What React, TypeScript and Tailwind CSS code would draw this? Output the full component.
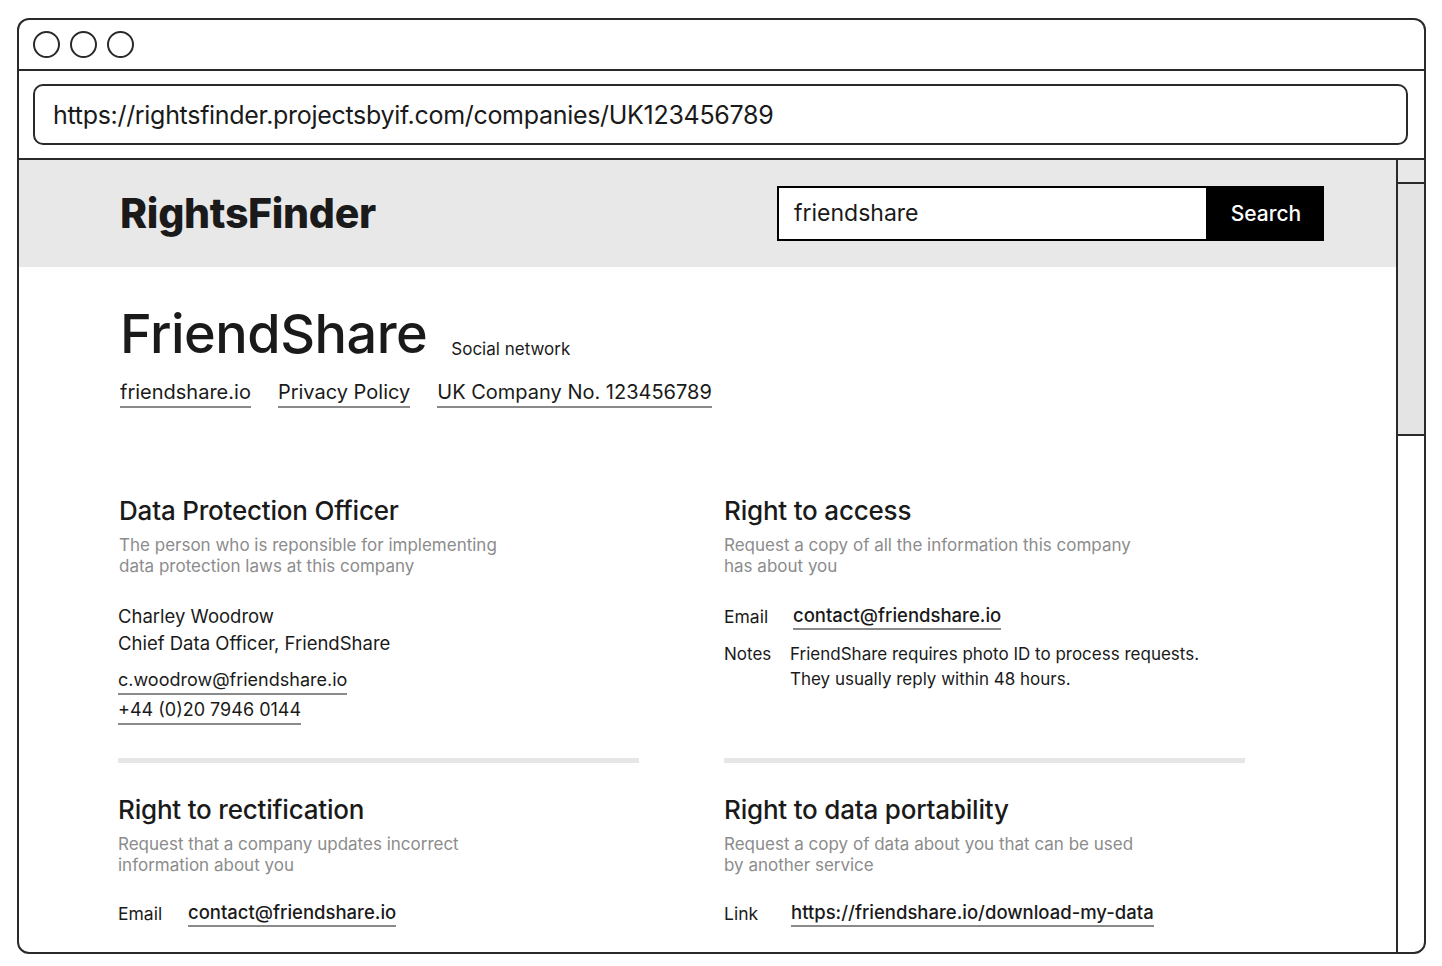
const font = { fontFamily: 'Inter, "Noto Sans", sans-serif' };

function Underlined({ children, className = '' }: { children: React.ReactNode; className?: string }) {
  return (
    <a className={`border-b-2 border-[#8a8a8a] pb-[1px] text-[#1a1a1a] ${className}`}>{children}</a>
  );
}

function SectionHead({ title, desc }: { title: string; desc: string[] }) {
  return (
    <div>
      <h2 className="text-[26px] font-medium leading-[32px] text-[#1a1a1a] tracking-[-0.2px]">{title}</h2>
      <p className="mt-[8px] text-[17px] leading-[21px] text-[#8c8c8c]">
        {desc.map((d, i) => (
          <span key={i} className="block">{d}</span>
        ))}
      </p>
    </div>
  );
}

export default function App() {
  return (
    <div className="w-[1442px] h-[966px] bg-white pt-[18px] pl-[17px]" style={font}>
      <div className="w-[1409px] h-[936px] border-2 border-[#2a2a2a] rounded-[12px] flex flex-col overflow-hidden">
        {/* title bar */}
        <div className="h-[51px] flex items-center gap-[10px] pl-[14px] border-b-2 border-[#2a2a2a] shrink-0">
          <span className="w-[27px] h-[27px] rounded-full border-2 border-[#2a2a2a]" />
          <span className="w-[27px] h-[27px] rounded-full border-2 border-[#2a2a2a]" />
          <span className="w-[27px] h-[27px] rounded-full border-2 border-[#2a2a2a]" />
        </div>
        {/* address bar */}
        <div className="h-[89px] flex items-center pl-[14px] pr-[16px] border-b-2 border-[#2a2a2a] shrink-0">
          <div className="w-full h-[61px] border-2 border-[#2a2a2a] rounded-[10px] flex items-center pl-[18px] pt-[3px] text-[25px] text-[#1a1a1a] tracking-[-0.3px]">
            https://rightsfinder.projectsbyif.com/companies/UK123456789
          </div>
        </div>
        {/* page */}
        <div className="flex flex-1 min-h-0">
          <main className="flex-1 min-w-0">
            <header className="h-[107px] bg-[#e8e8e8] flex items-center justify-between pl-[101px] pr-[72px]">
              <div className="text-[41px] font-extrabold text-[#1a1a1a] tracking-[-0.3px]">RightsFinder</div>
              <div className="flex h-[55px] border-2 border-black">
                <div className="w-[427px] bg-white flex items-center pl-[15px] text-[23px] text-[#1a1a1a]">friendshare</div>
                <button className="w-[116px] bg-black text-white text-[21px] font-medium pl-[4px]">Search</button>
              </div>
            </header>

            <div className="pl-[101px]">
              <div className="flex items-end mt-[36px]">
                <h1 className="text-[54px] font-medium leading-[62px] text-[#1a1a1a] tracking-[-0.5px]">FriendShare</h1>
                <span className="ml-[24px] mb-[3px] text-[17px] text-[#1a1a1a]">Social network</span>
              </div>
              <div className="flex gap-[27px] mt-[14px] text-[20px] leading-[26px]">
                <Underlined>friendshare.io</Underlined>
                <Underlined>Privacy Policy</Underlined>
                <Underlined>UK Company No. 123456789</Underlined>
              </div>

              <div className="grid grid-cols-[520px_520px] gap-x-[86px] mt-[87px] -ml-[1px]">
                {/* DPO */}
                <section>
                  <SectionHead
                    title="Data Protection Officer"
                    desc={['The person who is reponsible for implementing', 'data protection laws at this company']}
                  />
                  <div className="mt-[26px] -ml-[1px] text-[18.5px] leading-[27px] text-[#1a1a1a]">
                    <div>Charley Woodrow</div>
                    <div>Chief Data Officer, FriendShare</div>
                  </div>
                  <div className="mt-[11px] -ml-[1px] flex flex-col items-start gap-[3px] text-[18px] leading-[24px]">
                    <Underlined>c.woodrow@friendshare.io</Underlined>
                    <Underlined>+44 (0)20 7946 0144</Underlined>
                  </div>
                </section>

                {/* access */}
                <section className="-ml-[1px]">
                  <SectionHead
                    title="Right to access"
                    desc={['Request a copy of all the information this company', 'has about you']}
                  />
                  <div className="mt-[26px] flex items-center text-[17.5px] leading-[24px] text-[#1a1a1a]">
                    <span className="w-[69px]">Email</span>
                    <Underlined className="text-[18.5px] font-medium">contact@friendshare.io</Underlined>
                  </div>
                  <div className="mt-[12px] flex text-[17px] leading-[25px] text-[#1a1a1a]">
                    <span className="w-[66px] shrink-0">Notes</span>
                    <span>
                      FriendShare requires photo ID to process requests.
                      <br />
                      They usually reply within 48 hours.
                    </span>
                  </div>
                </section>

                <div className="h-[5px] bg-[#e6e6e6] mt-[33px] mb-[31px] -ml-[1px]" />
                <div className="h-[5px] bg-[#e6e6e6] mt-[33px] mb-[31px] -ml-[1px]" />

                {/* rectification */}
                <section className="-ml-[1px]">
                  <SectionHead
                    title="Right to rectification"
                    desc={['Request that a company updates incorrect', 'information about you']}
                  />
                  <div className="mt-[24px] flex items-center text-[17.5px] leading-[24px] text-[#1a1a1a]">
                    <span className="w-[70px]">Email</span>
                    <Underlined className="text-[18.5px] font-medium">contact@friendshare.io</Underlined>
                  </div>
                </section>

                {/* portability */}
                <section className="-ml-[1px]">
                  <SectionHead
                    title="Right to data portability"
                    desc={['Request a copy of data about you that can be used', 'by another service']}
                  />
                  <div className="mt-[24px] flex items-center text-[17.5px] leading-[24px] text-[#1a1a1a]">
                    <span className="w-[67px]">Link</span>
                    <Underlined className="text-[18.5px] font-medium">https://friendshare.io/download-my-data</Underlined>
                  </div>
                </section>
              </div>
            </div>
          </main>

          {/* scrollbar */}
          <div className="w-[28px] border-l-2 border-[#2a2a2a] flex flex-col shrink-0">
            <div className="h-[24px] bg-[#e8e8e8] border-b-2 border-[#2a2a2a]" />
            <div className="h-[252px] bg-[#e4e4e4] border-b-2 border-[#2a2a2a]" />
          </div>
        </div>
      </div>
    </div>
  );
}
